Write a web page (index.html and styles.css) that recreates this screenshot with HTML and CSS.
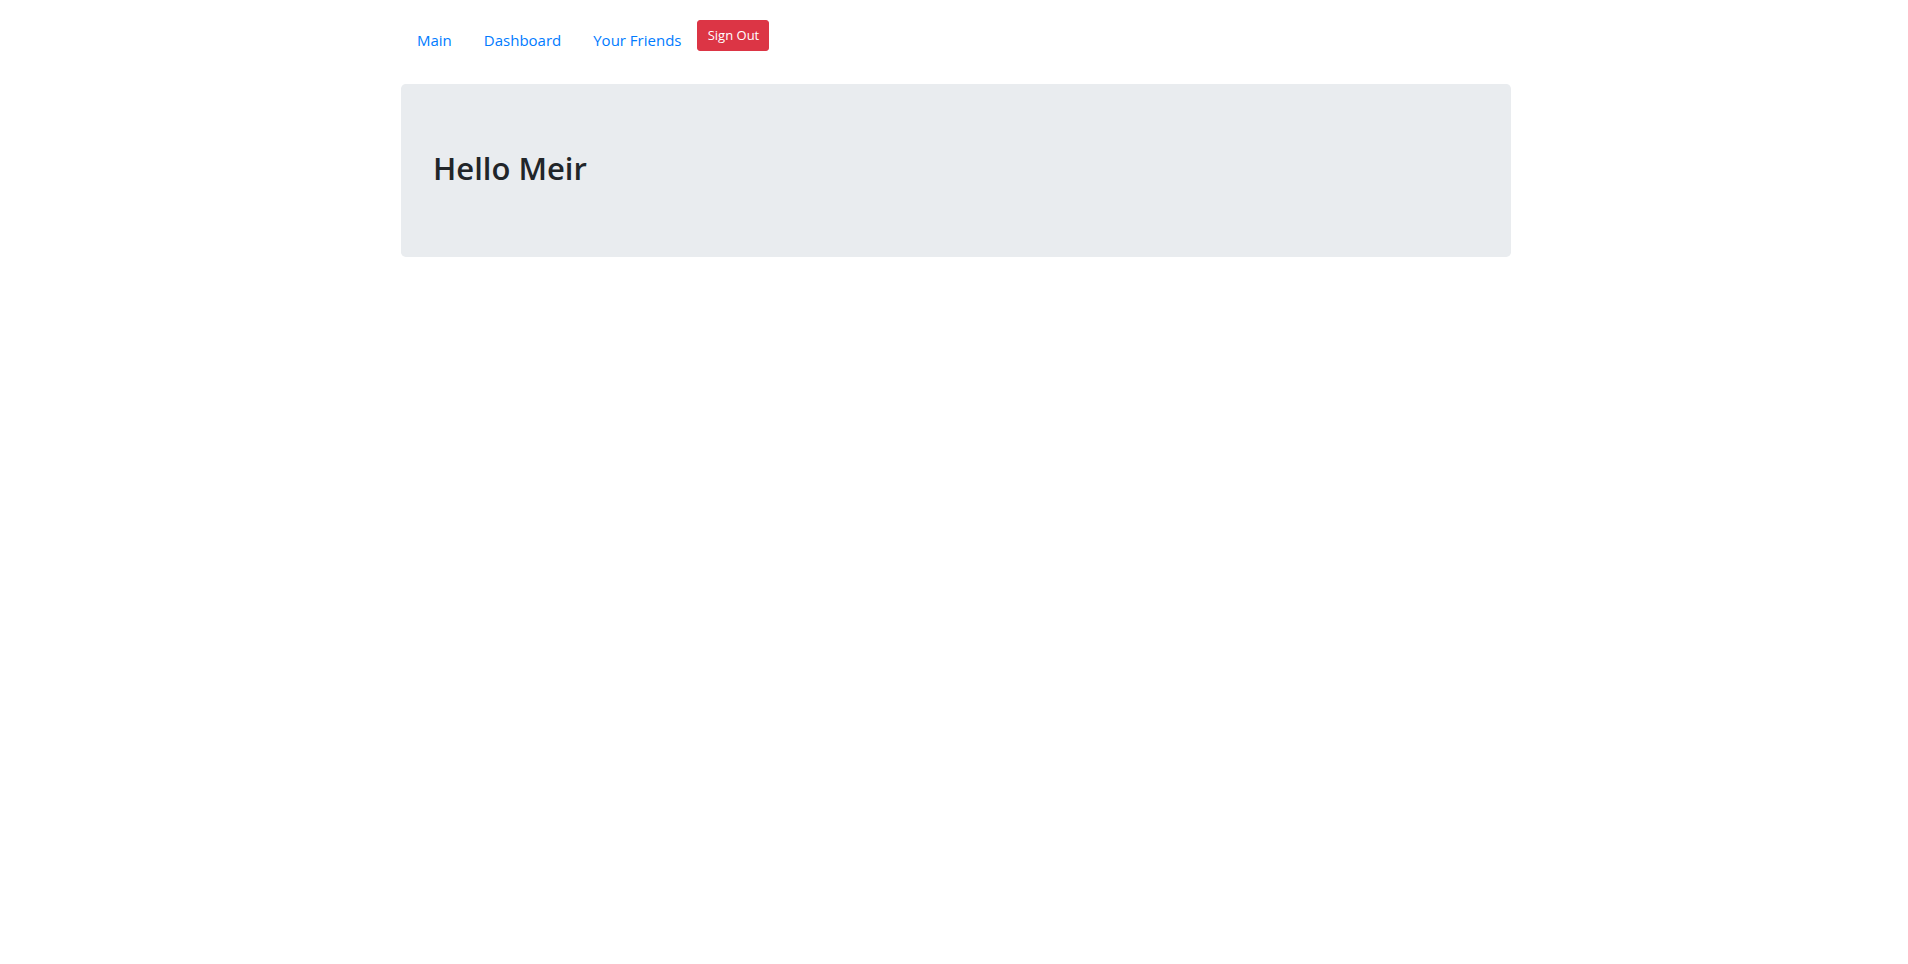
FILE: index.html
```html
<!DOCTYPE html>
<html lang="en">
<head>
<meta charset="utf-8">
<title>Hello Meir</title>
<link rel="stylesheet" href="styles.css">
</head>
<body>
<div class="container">
  <nav class="nav">
    <a class="nav-link" href="#">Main</a>
    <a class="nav-link" href="#">Dashboard</a>
    <a class="nav-link" href="#">Your Friends</a>
    <button class="btn-signout" type="button">Sign Out</button>
  </nav>
  <div class="jumbotron">
    <h2 class="greeting">Hello Meir</h2>
  </div>
</div>
</body>
</html>
```

FILE: styles.css
```css
* { box-sizing: border-box; }
html, body { margin: 0; padding: 0; background: #fff; }
body {
  font-family: "Open Sans", "Noto Sans", "Liberation Sans", sans-serif;
  font-size: 16px;
  line-height: 1.5;
  color: #212529;
}
.container {
  width: 1140px;
  margin: 0 auto;
  padding: 0 13px 0 17px;
}
.nav {
  display: flex;
  align-items: flex-start;
  margin-top: 20px;
  height: 40px;
}
.nav-link {
  display: block;
  padding: 8px 16px;
  color: #007bff;
  text-decoration: none;
  font-size: 15px;
  line-height: 24px;
}
.btn-signout {
  font-family: inherit;
  font-size: 13px;
  line-height: 21px;
  padding: 4px 8px;
  color: #fff;
  background: #dc3545;
  border: 1px solid #dc3545;
  border-radius: 3px;
  height: 31px;
  width: 72px;
  cursor: pointer;
}
.jumbotron {
  margin-top: 24px;
  background: #e9ecef;
  border-radius: 4.8px;
  padding: 64px 32px;
  height: 173px;
}
.greeting {
  margin: 0;
  font-size: 31px;
  font-weight: 600;
  line-height: 40px;
}
```
